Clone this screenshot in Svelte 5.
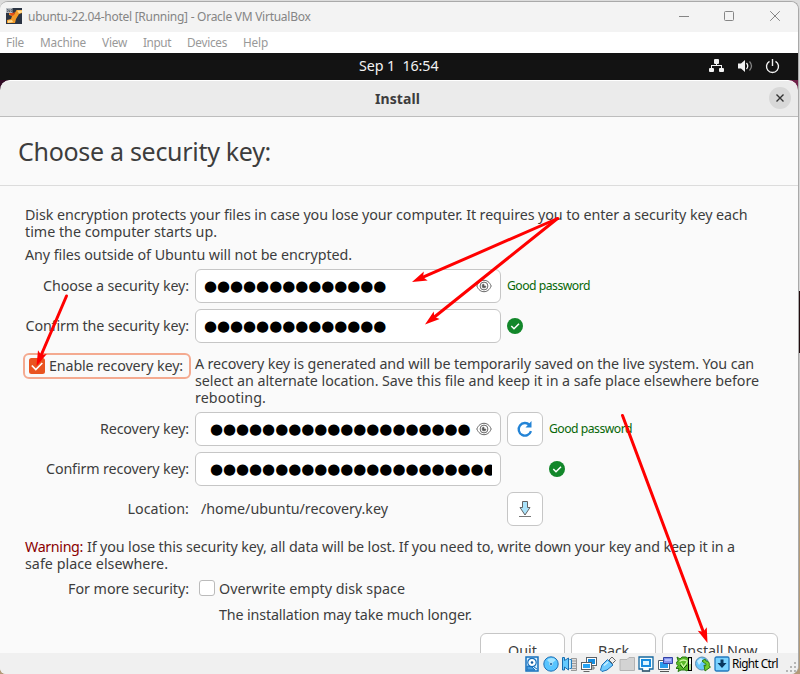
<script>
  const menus = [
    ['File', 18, 16],
    ['Machine', 46, 16],
    ['View', 25, 16],
    ['Input', 28, 16],
    ['Devices', 40, 16],
    ['Help', 25, 0]
  ];

  const dots = (n) => '●'.repeat(n);

  // Spread the glyphs of one line evenly over the given width.
  function fit(node, width) {
    node.style.letterSpacing = '0px';
    const natural = node.getBoundingClientRect().width;
    const count = [...node.textContent].length;
    node.style.letterSpacing = `${(width - natural) / count}px`;
  }

  // Line and filled head of one arrow.
  function arrow([x1, y1, x2, y2]) {
    const len = Math.hypot(x2 - x1, y2 - y1);
    const ux = (x2 - x1) / len;
    const uy = (y2 - y1) / len;
    const bx = x2 - ux * 15;
    const by = y2 - uy * 15;
    const nx = x2 - ux * 12;
    const ny = y2 - uy * 12;
    return {
      x1, y1, x2: nx, y2: ny,
      head: `${x2},${y2} ${bx - uy * 4.8},${by + ux * 4.8} ${nx},${ny} ${bx + uy * 4.8},${by - ux * 4.8}`
    };
  }
  const arrows = [
    [557.5, 218.5, 412, 282],
    [557.5, 218.5, 425, 324.5],
    [66.5, 296, 36.5, 366],
    [622.5, 415.5, 707.5, 643]
  ].map(arrow);
</script>

{#snippet eye()}
  <svg class="eye" width="16" height="14" viewBox="0 0 16 14" fill="none" stroke="#666" stroke-width="1">
    <path d="M.8 7C2.5 3 5 1.3 8 1.3S13.500 3 15.200 7C13.500 11 11 12.700 8 12.700S2.500 11 .8 7z" />
    <circle cx="8" cy="7" r="3.9" />
    <path d="M8 5a2 2 0 1 0 2 2H8z" fill="#555" stroke-width=".6" />
  </svg>
{/snippet}

{#snippet ok()}
  <svg width="16" height="16" viewBox="0 0 16 16">
    <circle cx="8" cy="8" r="8" fill="#12872a" />
    <path d="M4.300 8l2.700 2.700 5-5" fill="none" stroke="#fff" stroke-width="1.500" />
  </svg>
{/snippet}

<div class="desktop">
  <div class="edge"></div>
  <div class="window">
    <header class="titlebar">
      <svg width="16" height="16" viewBox="0 0 16 16">
        <rect width="16" height="16" fill="#2b3443" />
        <path d="M3 4l5 2.500L10.500 2H16v3l-3 1-3 5-1 4H1v-3l4-1 1-3-3-1z" fill="#f29a28" />
        <path d="M11 2.500h5v2l-3 1zM2 12.500l4-.5 1 2-5 1z" fill="#ffdc91" />
        <path d="M3 5l3 3 2-1 1-3-2 1z" fill="#e34e18" />
        <path d="M0 0h6.500v5H0z" fill="#b9bdc2" />
        <path d="M1 1.500h1v2H1M3 1.500v2h1v-2M5 1.500h1v2H5" fill="none" stroke="#48505c" stroke-width=".7" />
      </svg>
      <span class="caption" use:fit={282.500}>ubuntu-22.04-hotel [Running] - Oracle VM VirtualBox</span>
      <svg class="controls" width="102" height="12" viewBox="0 0 102 12" fill="none" stroke="#858585">
        <path d="M0 6.500h10" />
        <rect x="45.500" y="1.500" width="9" height="9" rx="1" />
        <path d="M91.200 1.200l9.600 9.600M100.800 1.200l-9.600 9.600" />
      </svg>
    </header>

    <nav class="menubar">
      {#each menus as [name, width, gap]}
        <span style:width="{width}px" style:margin-right="{gap}px"><span use:fit={width}>{name}</span></span>
      {/each}
    </nav>

    <div class="topbar">
      <span class="clock" use:fit={79.500}>Sep 1  16:54</span>
      <svg class="tray" width="72" height="16" viewBox="0 0 72 16">
        <g fill="#f2f2f2">
          <rect x="5" y="1" width="5" height="5" rx="1" />
          <rect x="0" y="10" width="5" height="4" rx="1" />
          <rect x="10" y="10" width="5" height="4" rx="1" />
          <path d="M7 5h1v2h5v3h-1V8H3v2H2V7h5z" />
          <path d="M29 5.500h3L36 2v12l-4-3.500h-3z" />
        </g>
        <g fill="none" stroke="#f2f2f2">
          <path d="M37.500 5q2.500 3 0 6" stroke-width="1.300" />
          <path d="M40.500 3.500q4 4.500 0 9" opacity=".5" stroke-width="1.300" />
          <path d="M60.500 3.300a6 6 0 1 0 6 0M63.500 1v7" stroke-width="1.400" />
        </g>
      </svg>
    </div>

    <div class="installer">
      <header class="dialog-head">
        <span use:fit={45}>Install</span>
        <button class="close" aria-label="Close">
          <svg width="8" height="8" viewBox="0 0 8 8"><path d="M.5.5l7 7M7.500.5l-7 7" stroke="#333" stroke-width="1.400" /></svg>
        </button>
      </header>
      <h1><span use:fit={253}>Choose a security key:</span></h1>

      <main>
        <p class="intro">
          <span use:fit={722.500}>Disk encryption protects your files in case you lose your computer. It requires you to enter a security key each</span>
          <span use:fit={192}>time the computer starts up.</span>
        </p>
        <p class="note"><span use:fit={327}>Any files outside of Ubuntu will not be encrypted.</span></p>

        <div class="row">
          <label for="k1"><span use:fit={146}>Choose a security key:</span></label>
          <div class="field" id="k1"><span class="dots">{dots(14)}</span>{@render eye()}</div>
          <span class="good"><span use:fit={83}>Good password</span></span>
        </div>
        <div class="row">
          <label for="k2"><span use:fit={163.500}>Confirm the security key:</span></label>
          <div class="field" id="k2"><span class="dots">{dots(14)}</span></div>
          {@render ok()}
        </div>

        <div class="recovery">
          <div class="toggle">
            <svg width="16" height="16" viewBox="0 0 16 16">
              <rect width="16" height="16" rx="2.500" fill="#e95420" />
              <path d="M2.800 7.500l4 4 6.500-6.500" fill="none" stroke="#fff" stroke-width="1.700" />
            </svg>
            <span class="raised" use:fit={134}>Enable recovery key:</span>
          </div>
          <p>
            <span use:fit={559}>A recovery key is generated and will be temporarily saved on the live system. You can</span>
            <span use:fit={564}>select an alternate location. Save this file and keep it in a safe place elsewhere before</span>
            <span use:fit={71}>rebooting.</span>
          </p>
        </div>

        <div class="row">
          <label for="k3"><span use:fit={89}>Recovery key:</span></label>
          <div class="field shifted" id="k3"><span class="dots">{dots(20)}</span>{@render eye()}</div>
          <button class="tool" aria-label="Generate">
            <svg width="18" height="18" viewBox="0 0 18 18">
              <path d="M13.600 5A6.300 6.300 0 1 0 15 11.200" fill="none" stroke="#2484d6" stroke-width="2.300" />
              <path d="M15.500 1v6.500H9.500z" fill="#2484d6" />
            </svg>
          </button>
          <span class="good"><span use:fit={83}>Good password</span></span>
        </div>
        <div class="row">
          <label for="k4"><span use:fit={143}>Confirm recovery key:</span></label>
          <div class="field shifted" id="k4"><span class="dots">{dots(22)}</span></div>
          <span class="tool-space"></span>
          {@render ok()}
        </div>
        <div class="row">
          <label for="loc"><span use:fit={61.500}>Location:</span></label>
          <div class="path" id="loc"><span use:fit={187}>/home/ubuntu/recovery.key</span></div>
          <button class="tool" aria-label="Choose location">
            <svg width="14" height="18" viewBox="0 0 14 18">
              <path d="M4.500 1.500h5v6h2.500L7 15 2 7.500h2.500z" fill="#aae3fb" stroke="#636363" />
              <path d="M1 16.500h12" stroke="#777" />
            </svg>
          </button>
        </div>

        <p class="warning">
          <span><b use:fit={58}>Warning:</b><span class="text" use:fit={648}>If you lose this security key, all data will be lost. If you need to, write down your key and keep it in a</span></span>
          <span use:fit={143}>safe place elsewhere.</span>
        </p>

        <div class="overwrite">
          <label for="ow"><span use:fit={121}>For more security:</span></label>
          <div class="box" id="ow"></div>
          <span use:fit={186}>Overwrite empty disk space</span>
        </div>
        <p class="longer"><span use:fit={253}>The installation may take much longer.</span></p>

        <div class="actions">
          <button class="quit"><span use:fit={29}>Quit</span></button>
          <button class="back"><span use:fit={31}>Back</span></button>
          <button class="go"><span use:fit={75}>Install Now</span></button>
        </div>
      </main>
    </div>

    <footer>
      <svg width="16" height="16" viewBox="0 0 16 16">
        <path d="M2 1h12v14H2z" fill="#d5efff" stroke="#1670bd" stroke-width="1.500" />
        <circle cx="8" cy="6.500" r="4.200" fill="#fff" stroke="#1670bd" stroke-width="1.200" />
        <circle cx="8" cy="6.500" r="1.300" fill="#155a9c" />
        <path d="M3 10l5 1 3 3H3zM10 11l3 2" fill="#4a9fe0" stroke="#1670bd" />
      </svg>
      <svg width="16" height="16" viewBox="0 0 16 16">
        <circle cx="8" cy="8" r="7.200" fill="#58c5ff" stroke="#1d70b6" />
        <path d="M4 4a6 6 0 0 1 9 0L8 8z" fill="#a5e5ff" />
        <circle cx="8" cy="8" r="1.500" fill="#155a9c" stroke="#d6f5ff" stroke-width=".7" />
      </svg>
      <svg width="16" height="16" viewBox="0 0 16 16">
        <path d="M9 2.500h5.500v12H9" fill="#ddd" stroke="#999" />
        <path d="M10 5h4M10 7.500h4M10 10h4M10 12.500h4" stroke="#999" />
        <path d="M.5 1.500h2v3L6.500 2v12l-4-3v3h-2z" fill="#63caff" stroke="#1a6dae" />
        <path d="M7.500 3.500h2v9h-2" fill="#b9e8ff" stroke="#277cbc" />
      </svg>
      <svg width="16" height="16" viewBox="0 0 16 16">
        <path d="M8 13h5v-2h-2z" fill="#ddd" stroke="#777" />
        <rect x="5.500" y="1.500" width="10" height="8" fill="#fff" stroke="#5c6166" />
        <path d="M7 3h7v5H7z" fill="#168de0" />
        <rect x=".5" y="6.500" width="10" height="7" fill="#fff" stroke="#5c6166" />
        <path d="M2 8h7v4H2z" fill="#27a4f5" /><path d="M2.500 15.500h6" stroke="#666" />
      </svg>
      <svg width="16" height="16" viewBox="0 0 16 16">
        <path d="M9 4l3-3 3.500 3.500-3 3z" fill="#eee" stroke="#666" />
        <path d="M7.500 3.500L13 9l-6 5-5 1.500L.5 14 2 9z" fill="#70cbff" stroke="#1d70b6" />
        <path d="M4 9.500L8 6" stroke="#caf0ff" stroke-width="1.500" />
      </svg>
      <svg width="16" height="16" viewBox="0 0 16 16">
        <path d="M1 3.500h7l2-2h5.500v13H1z" fill="#d3d3d3" stroke="#b4b4b4" />
      </svg>
      <svg width="16" height="16" viewBox="0 0 16 16">
        <path d="M1 1h14v12h-3.500v2h-7v-2H1z" fill="#f7ffff" stroke="#17689f" stroke-width="1.300" />
        <path d="M4 4h8v6H4z" fill="#d9f4ff" stroke="#168ce0" stroke-width="2" />
        <path d="M4 15h8" stroke="#555" />
      </svg>
      <svg width="16" height="16" viewBox="0 0 16 16">
        <path d="M1.500 4.500h11v9h-11z" fill="#fff" stroke="#55606b" />
        <path d="M3 6h8v6H3z" fill="#279cec" /><path d="M3 15.500h9" stroke="#555" />
        <path d="M6.500 1.500h9v6h-9z" fill="#8292eb" stroke="#3341a5" />
        <path d="M8 3h6v2H8z" fill="#b1bcff" />
      </svg>
      <svg width="16" height="16" viewBox="0 0 16 16">
        <path d="M1 1l3 2 2-2h4l3 2v10l-2 2-2-1H5l-3 1.500 1-3H0l2-3-2-2 2-3z" fill="#59b928" stroke="#26780f" />
        <path d="M3.500 5.500q4-3 8 0M5 7l2.500 4L11 6" fill="none" stroke="#d2f7a9" stroke-width="1.300" />
        <path d="M4 9l3.500 3.500L11 9" fill="none" stroke="#135b08" />
        <rect x="12.500" y="1.500" width="3" height="13" fill="#c4e3ad" stroke="#000" />
        <path d="M13 3h2v5h-2z" fill="#fff" />
      </svg>
      <svg width="16" height="16" viewBox="0 0 16 16">
        <circle cx="7" cy="7.500" r="6.500" fill="#69c7fb" stroke="#5c8bae" />
        <path d="M2 5l4-3 2 2-4 5z" fill="#c2eeff" />
        <path d="M7 5l3-2 1 2c3 0 4 3 3 5l1.500 1-5.500 4-1-6 1.500 1c1-2 0-3-1-3z" fill="#73cd30" stroke="#2a7914" />
      </svg>
      <svg width="16" height="16" viewBox="0 0 16 16">
        <rect x="1" y="1" width="14" height="14" rx="1.500" fill="#7bd3ff" stroke="#2378bd" stroke-width="1.300" />
        <path d="M6.500 3.500h3V7h3L8 12 3.500 7h3z" fill="#09375f" />
      </svg>
      <span class="host-key"><span use:fit={46}>Right Ctrl</span></span>
      <svg class="grip" width="10" height="10" viewBox="0 0 10 10" fill="#b5b5b5">
        <path d="M8 0h2v2H8zM8 4h2v2H8zM8 8h2v2H8zM4 4h2v2H4zM4 8h2v2H4zM0 8h2v2H0z" />
      </svg>
    </footer>
  </div>

  <svg class="arrows" width="800" height="674" viewBox="0 0 800 674">
    {#each arrows as a}
      <line x1={a.x1} y1={a.y1} x2={a.x2} y2={a.y2} stroke="#f00" stroke-width="3" stroke-linecap="round" />
      <polygon points={a.head} fill="#f00" />
    {/each}
  </svg>
</div>

<style>
  * { box-sizing: border-box; }
  .desktop {
    position: relative;
    width: 800px;
    height: 674px;
    overflow: hidden;
    padding-top: 1px;
    background: linear-gradient(#d8d8d8 0 291px, #210c0e 291px 353px, #c3c3c3 353px 460px, #b39a78 460px);
    font: 14.300px/17px "Noto Sans", sans-serif;
    color: #3d3d3d;
  }
  .edge { position: absolute; left: 0; top: 0; width: 800px; height: 8px; background: #dcdcdc; }
  span, b { white-space: pre; }
  p { margin: 0; }
  p > span { display: block; width: max-content; }
  svg { display: block; flex: none; }
  button { padding: 0; font: inherit; color: inherit; }
  .window {
    position: relative;
    width: 799px;
    height: 673px;
    border: solid #a9a9a9;
    border-width: 1px 1px 0 0;
    border-radius: 8px 8px 8px 6px;
    overflow: hidden;
    background: #f0f0f0;
  }
  .titlebar {
    height: 30px;
    display: flex;
    align-items: center;
    padding: 0 17px 2px 6px;
    background: #f3f3f3;
    color: #858585;
    font-size: 12px;
  }
  .caption { margin-left: 6px; }
  .controls { margin-left: auto; }
  .menubar {
    display: flex;
    height: 21px;
    padding: 2px 0 0 6px;
    background: #fff;
    color: #999;
    font-size: 11.800px;
  }
  .topbar {
    position: relative;
    height: 27px;
    display: flex;
    align-items: center;
    padding-left: 359px;
    background: #131313;
    color: #f2f2f2;
  }
  .clock { margin-top: -3px; }
  .tray { position: absolute; left: 709px; top: 5px; }
  .installer {
    height: 573px;
    overflow: hidden;
    background: linear-gradient(90deg, #300a24, #6d2048) top / 100% 12px no-repeat;
  }
  .dialog-head {
    position: relative;
    height: 37px;
    padding: 9px 0 0 375px;
    border-top: 1px solid #fff;
    border-bottom: 1px solid #bdbdbd;
    border-radius: 10px 10px 0 0;
    background: #ebebeb;
    font-weight: 700;
    font-size: 14px;
  }
  .close {
    position: absolute;
    right: 7px;
    top: 6px;
    width: 22px;
    height: 22px;
    display: grid;
    place-items: center;
    border: 0;
    border-radius: 50%;
    background: #d8d8d8;
  }
  h1 {
    height: 69px;
    margin: 0;
    padding: 17px 0 0 18px;
    border-bottom: 1px solid #dcdcdc;
    background: #fafafa;
    font-size: 25px;
    line-height: 34px;
    font-weight: 400;
  }
  main { height: 467px; padding: 20px 0 0 25px; background: #fafafa; }
  .intro { margin-bottom: 6px; }
  .note { margin-bottom: 6px; }
  .row { display: flex; height: 34px; margin-bottom: 6px; align-items: center; gap: 6px; }
  label { width: 163px; display: flex; justify-content: flex-end; flex: none; }
  .row label, .path, .good { padding-bottom: 2px; }
  .row label { width: 164px; margin-right: -1px; }
  .field {
    position: relative;
    width: 306px;
    height: 34px;
    margin-left: 1px;
    padding: 0 8px;
    display: flex;
    align-items: center;
    border: 1px solid #c6c6c6;
    border-radius: 6px;
    background: #fff;
  }
  .shifted { padding-left: 14px; }
  .dots {
    flex: 1;
    min-width: 0;
    overflow: hidden;
    color: #000;
    font: 15px/24px "DejaVu Sans", sans-serif;
    letter-spacing: -.060px;
  }
  .eye { position: absolute; right: 8px; top: 9px; }
  .good { color: #076707; font-size: 12.200px; }
  .tool {
    width: 36px;
    height: 34px;
    display: grid;
    place-items: center;
    border: 1px solid #c6c6c6;
    border-radius: 6px;
    background: #fff;
  }
  .tool-space { width: 36px; }
  .path { width: 306px; margin-left: 1px; padding-left: 6px; }
  .recovery { display: flex; align-items: flex-start; height: 63px; padding-top: 4px; margin-left: -2px; }
  .toggle {
    width: 168px;
    height: 26px;
    margin-right: 4px;
    display: flex;
    align-items: center;
    gap: 4px;
    padding-left: 4px;
    border: 2px solid #f4aa90;
    border-radius: 6px;
  }
  .raised { padding-bottom: 2px; }
  .recovery p { margin-top: 2px; }
  .warning { margin-top: 12px; height: 34px; }
  .warning b { color: #8b0000; font-weight: 400; }
  .warning .text { margin-left: 4px; }
  .overwrite { display: flex; align-items: center; height: 18px; margin-top: 7px; }
  .overwrite label { width: 164px; }
  .box { width: 16px; height: 16px; margin: 0 4px 0 10px; border: 1px solid #bbb; border-radius: 3px; background: #fff; }
  .longer { padding: 9px 0 0 194px; }
  .actions { display: flex; margin: 10px 0 0 455px; }
  .actions button { height: 34px; border: 1px solid #c6c6c6; border-radius: 6px; background: #fff; }
  .quit { width: 85px; margin-right: 6px; }
  .back { width: 85px; margin-right: 6px; }
  .go { width: 116px; }
  footer {
    position: relative;
    display: flex;
    align-items: center;
    gap: 3px;
    height: 21px;
    padding-left: 523.500px;
    background: #f0f0f0;
    color: #000;
    font-size: 11.800px;
  }
  .host-key { margin-left: -.500px; }
  .grip { position: absolute; right: 2px; bottom: 2px; }
  .arrows { position: absolute; left: 0; top: 0; pointer-events: none; }
</style>
